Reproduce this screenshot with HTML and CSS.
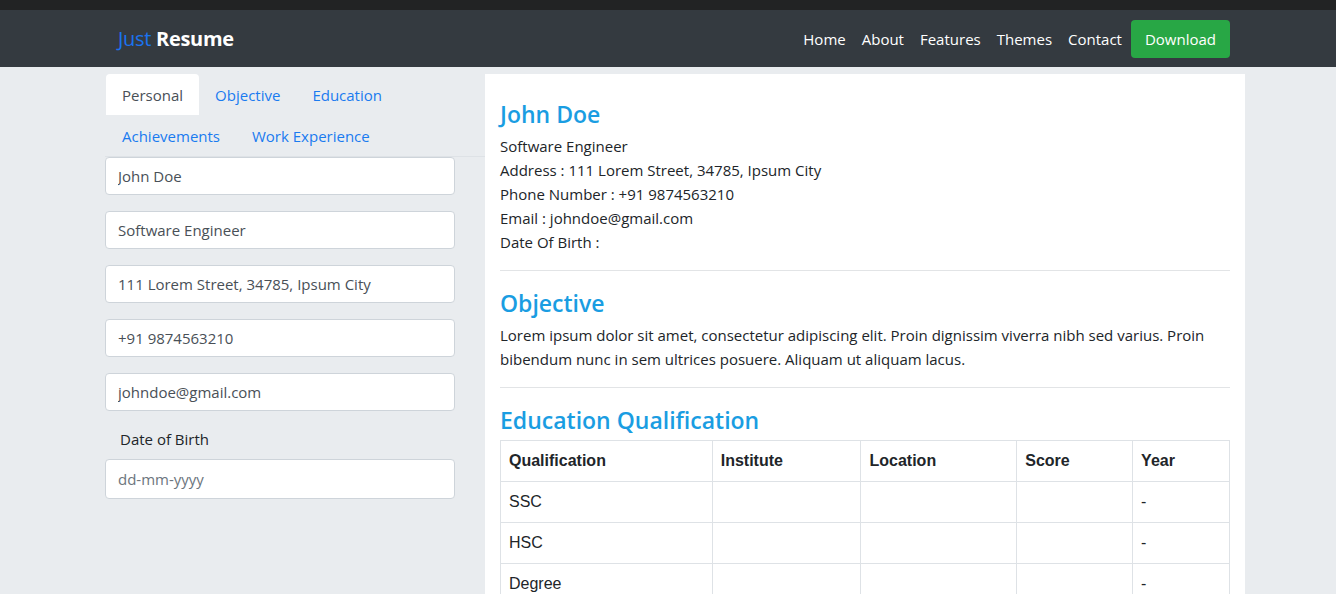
FILE: index.html
```html
<!DOCTYPE html>
<html>
<head>
<meta charset="utf-8">
<link rel="stylesheet" href="styles.css">
</head>
<body>
<div class="topstrip"></div>
<nav class="navbar">
  <div class="nav-inner">
    <a class="brand"><span class="just">Just</span> <span class="resume">Resume</span></a>
    <ul class="nav-links">
      <li><a>Home</a></li>
      <li><a>About</a></li>
      <li><a>Features</a></li>
      <li><a>Themes</a></li>
      <li><a>Contact</a></li>
      <li><a class="btn-download">Download</a></li>
    </ul>
  </div>
</nav>
<main class="main">
  <section class="editor">
    <ul class="tabs">
      <li class="tab active">Personal</li>
      <li class="tab">Objective</li>
      <li class="tab">Education</li>
      <li class="tab">Achievements</li>
      <li class="tab">Work Experience</li>
    </ul>
    <form class="form">
      <input class="field" type="text" value="John Doe">
      <input class="field" type="text" value="Software Engineer">
      <input class="field" type="text" value="111 Lorem Street, 34785, Ipsum City">
      <input class="field" type="text" value="+91 9874563210">
      <input class="field" type="text" value="johndoe@gmail.com">
      <label class="label">Date of Birth</label>
      <input class="field date" type="text" value="dd-mm-yyyy">
    </form>
  </section>
  <section class="preview">
    <h2 class="heading name">John Doe</h2>
    <p class="info">Software Engineer<br>Address : 111 Lorem Street, 34785, Ipsum City<br>Phone Number : +91 9874563210<br>Email : johndoe@gmail.com<br>Date Of Birth :</p>
    <hr class="rule">
    <h2 class="heading">Objective</h2>
    <p class="info">Lorem ipsum dolor sit amet, consectetur adipiscing elit. Proin dignissim viverra nibh sed varius. Proin bibendum nunc in sem ultrices posuere. Aliquam ut aliquam lacus.</p>
    <hr class="rule">
    <h2 class="heading">Education Qualification</h2>
    <table class="edu">
      <thead>
        <tr><th class="c1">Qualification</th><th class="c2">Institute</th><th class="c3">Location</th><th class="c4">Score</th><th class="c5">Year</th></tr>
      </thead>
      <tbody>
        <tr><td>SSC</td><td></td><td></td><td></td><td>-</td></tr>
        <tr><td>HSC</td><td></td><td></td><td></td><td>-</td></tr>
        <tr><td>Degree</td><td></td><td></td><td></td><td>-</td></tr>
      </tbody>
    </table>
  </section>
</main>
</body>
</html>
```
FILE: styles.css
```css
* { box-sizing: border-box; }
html, body { margin: 0; padding: 0; }
body {
  background: #e9ecef;
  font-family: "Segoe UI", "Open Sans", "Noto Sans", sans-serif;
  font-size: 15px;
  line-height: 24px;
  color: #212529;
  overflow: hidden;
  height: 594px;
}
.topstrip { height: 10px; background: #222324; }
.navbar { height: 57px; background: #343a40; }
.nav-inner {
  margin-left: 118px;
  width: 1112px;
  height: 57px;
  display: flex;
  align-items: center;
  justify-content: space-between;
}
.brand { font-size: 20px; line-height: 30px; letter-spacing: -0.3px; }
.just { color: #1a73f0; }
.resume { color: #fff; font-weight: 700; }
.nav-links { list-style: none; margin: 0; padding: 0; display: flex; align-items: center; }
.nav-links a { color: #fff; display: block; padding: 8px 8px; font-size: 15px; }
.nav-links a.btn-download {
  background: #28a745;
  border-radius: 4px;
  padding: 7px 14px;
  margin-left: 1px;
  line-height: 24px;
}
.main { display: flex; margin-left: 105px; width: 1140px; padding-top: 7px; }
.editor { width: 380px; flex: none; }
.tabs {
  list-style: none; margin: 0; padding: 0 0 0 1px;
  display: flex; flex-wrap: wrap;
  border-bottom: 1px solid #dee2e6;
  width: 380px;
}
.tab {
  padding: 9px 16px 8px;
  height: 41px;
  color: #1a7bf0;
  border-top-left-radius: 4px;
  border-top-right-radius: 4px;
  font-size: 15px;
}
.tab.active { background: #fff; color: #495057; }
.form { display: flex; flex-direction: column; width: 350px; }
.field {
  display: block;
  width: 350px;
  height: 38px;
  margin: 0 0 16px;
  padding: 6px 12px;
  font: inherit;
  color: #495057;
  background: #fff;
  border: 1px solid #ced4da;
  border-radius: 4px;
}
.field.date { height: 40px; color: #6c757d; }
.label { padding: 0 0 0 15px; margin-bottom: 8px; }
.preview {
  width: 760px;
  flex: none;
  background: #fff;
  padding: 24px 15px 0;
  height: 520px;
}
.heading {
  margin: 0 0 4px;
  font-size: 23px;
  line-height: 32px;
  font-weight: 600;
  color: #1a9de2;
}
.info { margin: 0; }
.rule { border: 0; border-top: 1px solid #e2e4e6; margin: 16px 0; }
.edu {
  width: 730px;
  border-collapse: collapse;
  font-family: "Liberation Sans", Arial, sans-serif;
  font-size: 16px;
  color: #212529;
}
.edu th, .edu td {
  border: 1px solid #dee2e6;
  padding: 8px;
  line-height: 24px;
  text-align: left;
  vertical-align: top;
}
.edu th { font-weight: 700; }
.c1 { width: 212px; }
.c2 { width: 149px; }
.c3 { width: 156px; }
.c4 { width: 116px; }
.c5 { width: 97px; }
```
